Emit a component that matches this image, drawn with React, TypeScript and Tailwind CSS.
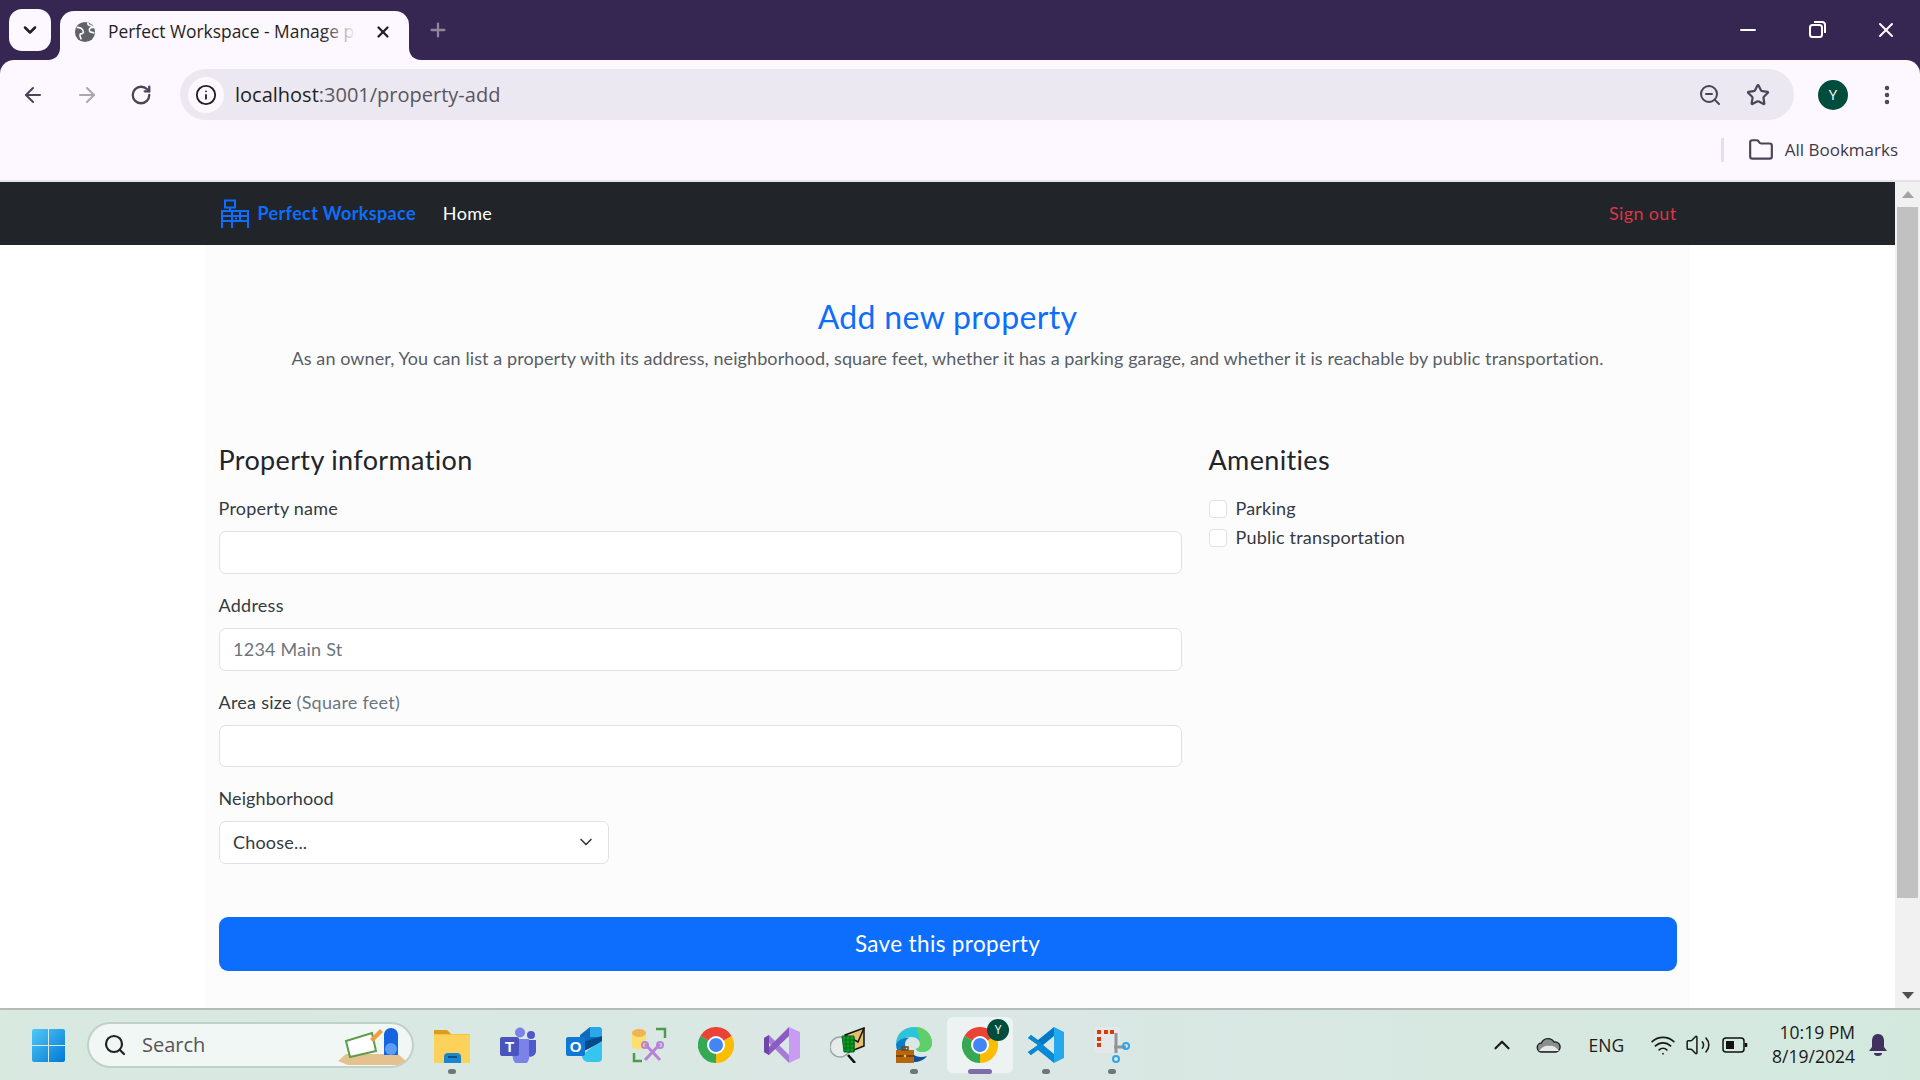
import React from "react";
import { ArrowLeft, ArrowRight, RotateCw, Info, ZoomOut, Star, EllipsisVertical, Folder, ChevronDown, ChevronUp, X, Plus, Minus, Search, Wifi, Volume2 } from "lucide-react";

const pageFont = "font-['Lato','Noto_Sans',sans-serif]";
const uiFont = "font-['Open_Sans','Noto_Sans',sans-serif]";

const Field = ({ label, hint, placeholder }: { label: string; hint?: string; placeholder?: string }) => (
  <div className="mb-[18px]">
    <label className="block mb-[9px] text-[18px] leading-[27px] tracking-[0.25px] text-[#343a40]">
      {label} {hint && <span className="text-[#6c757d]">{hint}</span>}
    </label>
    <input
      placeholder={placeholder}
      className="block w-full h-[42.75px] px-[13.5px] bg-white border border-[#dee2e6] rounded-[6.75px] text-[18px] tracking-[0.25px] placeholder:text-[#6c757d] outline-none"
    />
  </div>
);

const Amenity = ({ label }: { label: string }) => (
  <label className="flex items-center h-[29px] text-[18px] tracking-[0.2px] text-[#343a40]">
    <span className="w-[18px] h-[18px] mr-[9px] bg-white border border-[#dee2e6] rounded-[4px]" />
    {label}
  </label>
);

const WorkspaceLogo = () => (
  <svg viewBox="0 0 30 30" className="ml-[1px] w-[30px] h-[30px] text-[#0d6efd]" fill="none" stroke="currentColor" strokeWidth="2">
    <rect x="5" y="1.5" width="10" height="7" />
    <path d="M10 8.5v3M1 12h28M2 12v17M28 12v17M2 17h26M2 22h26M12 12v17M20 12v10M15 19.500h2" />
  </svg>
);

const TabCorner = ({ flip }: { flip?: boolean }) => (
  <svg viewBox="0 0 12 12" className={`absolute bottom-0 w-[12px] h-[12px] text-[#fdf7ff] ${flip ? "-right-[12px] -scale-x-100" : "-left-[12px]"}`}>
    <path d="M12 0v12H0C7 12 12 7 12 0z" fill="currentColor" />
  </svg>
);

const WindowsIcon = () => (
  <svg viewBox="0 0 35 35" className="w-[35px] h-[35px]">
    <defs>
      <linearGradient id="win" x1="0" y1="0" x2="1" y2="1">
        <stop offset="0" stopColor="#52c8f8" />
        <stop offset="1" stopColor="#0078d4" />
      </linearGradient>
    </defs>
    <path d="M1 3a2 2 0 0 1 2-2h14v16H1zM18 1h14a2 2 0 0 1 2 2v14H18zM1 18h16v16H3a2 2 0 0 1-2-2zM18 18h16v14a2 2 0 0 1-2 2H18z" fill="url(#win)" />
  </svg>
);

const FolderIcon = () => (
  <svg viewBox="0 0 36 36" className="w-[36px] h-[36px]">
    <path d="M0 3h13l4 4h19v29H0z" fill="#f5c343" />
    <path d="M0 3h13l4 4H0z" fill="#d99f1c" />
    <rect x="0" y="8" width="36" height="28" fill="#fdd25a" />
    <path d="M10 30a4 4 0 0 1 4-4h9a4 4 0 0 1 4 4v6H10z" fill="#1a86d0" />
    <rect x="14" y="29" width="9" height="2" fill="#0c4f87" />
  </svg>
);

const TeamsIcon = () => (
  <svg viewBox="0 0 36 36" className="w-[36px] h-[36px]">
    <circle cx="20" cy="5.500" r="5" fill="#7b83eb" />
    <circle cx="31" cy="8" r="4" fill="#5059c9" />
    <path d="M26 13h10v12a6 6 0 0 1-10 3z" fill="#5059c9" />
    <path d="M10 12h19v16a8 8 0 0 1-16 4z" fill="#7b83eb" />
    <rect x="0" y="10" width="19" height="19" rx="2" fill="#4b53bc" />
    <text x="9.500" y="25" textAnchor="middle" fontSize="15" fontWeight="700" fill="#fff" fontFamily="Liberation Sans">T</text>
  </svg>
);

const OutlookIcon = () => (
  <svg viewBox="0 0 36 36" className="w-[36px] h-[36px]">
    <path d="M14 8 24 0h8a4 4 0 0 1 4 3v11l-22 12z" fill="#0f6cbd" />
    <path d="M24 0h8a4 4 0 0 1 4 3v7H24z" fill="#28a8ea" />
    <path d="M14 16 36 9v6L14 26z" fill="#064a8c" />
    <path d="M36 14v17a4 4 0 0 1-4 4H22a6 6 0 0 1-6-6l6-6z" fill="#35c5ef" />
    <rect x="0" y="10" width="19" height="19" rx="2" fill="#0f78d4" />
    <text x="9.500" y="25" textAnchor="middle" fontSize="15" fontWeight="700" fill="#fff" fontFamily="Liberation Sans">O</text>
  </svg>
);

const ToolsIcon = () => (
  <svg viewBox="0 0 36 36" className="w-[36px] h-[36px]">
    <path d="M0 6c0-3 3-4 7-4s7 1 7 4v13c0 2-3 3-7 3s-7-1-7-3z" fill="#fddf6d" />
    <ellipse cx="7" cy="6" rx="7" ry="4" fill="#f0b357" />
    <path d="M24 2h9v9M2 26v8h8" fill="none" stroke="#4c9a4c" strokeWidth="2.500" />
    <path d="M13 17 28 33M28 17 13 33" stroke="#b583d8" strokeWidth="3" />
    <circle cx="13" cy="18" r="3" fill="none" stroke="#b583d8" strokeWidth="2" />
    <circle cx="28" cy="18" r="3" fill="none" stroke="#b583d8" strokeWidth="2" />
  </svg>
);

const ChromeIcon = () => (
  <svg viewBox="0 0 36 36" className="w-[36px] h-[36px]">
    <path d="M18 18 2.400 9A18 18 0 0 1 33.600 9z" fill="#ea4335" />
    <path d="M18 18 33.600 9A18 18 0 0 1 18 36z" fill="#fbbc04" />
    <path d="M18 18 18 36A18 18 0 0 1 2.400 9z" fill="#34a853" />
    <circle cx="18" cy="18" r="9" fill="#fff" />
    <circle cx="18" cy="18" r="7" fill="#4285f4" />
  </svg>
);

const VisualStudioIcon = () => (
  <svg viewBox="0 0 36 36" className="w-[36px] h-[36px]">
    <path d="M25 0 36 5v26l-11 5z" fill="#c79cf2" />
    <path d="M0 11 5 8l20 20v8z" fill="#a67bd8" />
    <path d="M25 0v9L5 28l-5-3z" fill="#8a5cc2" />
    <path d="M0 11l5-3v20l-5-3z" fill="#6f47a8" />
  </svg>
);

const MailSearchIcon = () => (
  <svg viewBox="0 0 36 36" className="w-[36px] h-[36px]">
    <circle cx="10" cy="20" r="10" fill="#e7ecea" stroke="#9ea5a3" strokeWidth="1.500" />
    <path d="M15 8 34 1v18l-15 6z" fill="#e5c06c" stroke="#111" strokeWidth="1.500" />
    <path d="M15 8 28 15 34 1" fill="none" stroke="#111" strokeWidth="1.500" />
    <path d="M12 9h12v16H14z" fill="#0d9e1a" stroke="#063" strokeWidth="1" />
    <path d="M14 13h11M14 17h11M14 21h10M16 9v16M20 9v16M24 10v15" stroke="#062" strokeWidth="1" />
    <path d="m18 28 7 8" stroke="#111" strokeWidth="2.500" />
  </svg>
);

const EdgeIcon = () => (
  <svg viewBox="0 0 36 36" className="w-[36px] h-[36px]">
    <path d="M0 17C0 7 8 0 18 0c10 0 18 7 18 16 0 6-5 9-10 9-3 0-5-1-6-3 3-1 4-3 4-5 0-4-4-7-8-7C8 10 3 13 0 17z" fill="#2cc4d8" />
    <path d="M20 0c9 0 16 7 16 16 0 6-5 9-10 9-3 0-5-1-6-3 3-1 4-3 4-5 0-6-2-11-4-17z" fill="#5fd068" />
    <path d="M0 17c3-5 9-7 13-6-4 2-5 6-3 10 0 5 3 9 8 12C8 33 0 27 0 17z" fill="#0f7cc6" />
    <path d="M18 35c5 0 10-2 13-6-6 2-12 1-15-3-2 4-1 7 2 9z" fill="#0f4f9c" />
    <rect x="0" y="23" width="18" height="13" fill="#b5660f" />
    <rect x="0" y="28" width="18" height="2" fill="#7a4308" />
    <rect x="6" y="20" width="6" height="3" fill="none" stroke="#7a4308" strokeWidth="1.500" />
    <circle cx="9" cy="29" r="1.300" fill="#f4c542" />
  </svg>
);

const VsCodeIcon = () => (
  <svg viewBox="0 0 36 36" className="w-[36px] h-[36px]">
    <path d="M26 0 36 5v26l-10 5z" fill="#24a8ee" />
    <path d="M26 0v9L9 23l-6 5-3-3 10-7L0 11l3-3 7 5z" fill="#0078c8" />
    <path d="M26 36V27L9 13 3 8l-3 3 10 7L0 25l3 3 7-5z" fill="#0a8ad4" />
  </svg>
);

const SnipIcon = () => (
  <svg viewBox="0 0 36 36" className="w-[36px] h-[36px]">
    <rect x="0" y="0" width="26" height="26" rx="4" fill="#e4e8e8" />
    <rect x="3" y="3" width="4" height="4" fill="#d83b01" />
    <rect x="10" y="3" width="4" height="4" fill="#d83b01" />
    <rect x="16" y="3" width="4" height="4" fill="#d83b01" />
    <rect x="3" y="10" width="4" height="4" fill="#d83b01" />
    <rect x="3" y="16" width="4" height="4" fill="#d83b01" />
    <path d="M22 6v20M20 20h12" stroke="#8e9696" strokeWidth="3" />
    <circle cx="32" cy="19" r="3" fill="none" stroke="#2ea3ea" strokeWidth="2" />
    <circle cx="22" cy="32" r="3" fill="none" stroke="#2ea3ea" strokeWidth="2" />
  </svg>
);

const tasks = [
  { icon: <FolderIcon />, dot: true },
  { icon: <TeamsIcon /> },
  { icon: <OutlookIcon /> },
  { icon: <ToolsIcon /> },
  { icon: <ChromeIcon /> },
  { icon: <VisualStudioIcon /> },
  { icon: <MailSearchIcon /> },
  { icon: <EdgeIcon />, dot: true },
  { icon: <ChromeIcon />, active: true },
  { icon: <VsCodeIcon />, dot: true },
  { icon: <SnipIcon />, dot: true },
];

const BrowserChrome = () => (
  <div className={`${uiFont} bg-[#352752]`}>
    <div className="flex h-[60px]">
      <div className="flex items-center justify-center mt-[9px] ml-[9px] w-[42px] h-[42px] rounded-[13px] bg-[#fdf7ff]">
        <ChevronDown className="w-[20px] h-[20px] text-[#1f1f1f]" strokeWidth={3} />
      </div>
      <div className="relative flex items-center mt-[11px] ml-[9px] w-[349px] h-[49px] px-[14px] rounded-t-[14px] bg-[#fdf7ff]">
        <TabCorner />
        <TabCorner flip />
        <svg viewBox="0 0 24 24" className="w-[22px] h-[22px] mb-[8px] shrink-0">
          <circle cx="12" cy="12" r="11" fill="#5f6368" />
          <path d="M3 7c3 0 6 1 7 4 1 2-1 3-3 3-1 1 0 4 1 6M15 2c0 2 1 3 3 3l3 2c-3 0-5 1-4 4 1 2 3 1 5 2" fill="none" stroke="#fdf7ff" strokeWidth="1.800" />
        </svg>
        <div className="relative ml-[12px] mb-[8px] w-[248px] overflow-hidden whitespace-nowrap text-[17.400px] text-[#1f1f1f]">
          Perfect Workspace - Manage properties
          <span className="absolute right-0 top-0 h-full w-[34px] bg-gradient-to-r from-transparent to-[#fdf7ff]" />
        </div>
        <X className="ml-[18px] mb-[8px] w-[18px] h-[18px] text-[#1f1f1f] shrink-0" strokeWidth={3} />
      </div>
      <Plus className="mt-[19px] ml-[18px] w-[22px] h-[22px] text-[#8f8699]" strokeWidth={2.5} />
      <div className="flex ml-auto mr-[22px] mt-[18px] h-[24px] items-center gap-[45px] text-white">
        <Minus className="w-[24px] h-[24px]" strokeWidth={1.8} />
        <svg viewBox="0 0 24 24" className="w-[24px] h-[24px]" fill="none" stroke="currentColor" strokeWidth="2">
          <rect x="5" y="7" width="12" height="12" rx="2.500" />
          <path d="M9 4h8a3 3 0 0 1 3 3v8" />
        </svg>
        <X className="w-[24px] h-[24px]" strokeWidth={2} />
      </div>
    </div>
    <div className="rounded-t-[14px] bg-[#fdf7ff]">
      <div className="flex items-center h-[51px] pt-0 pl-[6px] translate-y-[9px]">
        <span className="flex justify-center w-[54px]"><ArrowLeft className="w-[24px] h-[24px] text-[#4a4458]" /></span>
        <span className="flex justify-center w-[54px]"><ArrowRight className="w-[24px] h-[24px] text-[#aaa6b2]" /></span>
        <span className="flex justify-center w-[54px]"><RotateCw className="w-[22px] h-[22px] text-[#4a4458]" strokeWidth={2.5} /></span>
        <div className="flex items-center ml-[12px] w-[1614px] h-[51px] pl-[8px] pr-[24px] rounded-full bg-[#ebe8f1]">
          <span className="flex items-center justify-center w-[36px] h-[36px] rounded-full bg-[#fdf7ff]">
            <Info className="w-[22px] h-[22px] text-[#1f1f1f]" />
          </span>
          <span className="ml-[11px] text-[20px] text-[#1f1f1f]">
            localhost<span className="text-[#5a5560]">:3001/property-add</span>
          </span>
          <ZoomOut className="ml-auto w-[24px] h-[24px] text-[#4a4458]" />
          <Star className="ml-[24px] w-[24px] h-[24px] text-[#4a4458]" strokeWidth={2.2} />
        </div>
        <span className="flex items-center justify-center ml-[24px] w-[30px] h-[30px] rounded-full bg-[#004d3d] text-[15px] text-white">Y</span>
        <EllipsisVertical className="ml-[27px] w-[24px] h-[24px] text-[#4a4458]" strokeWidth={2.5} />
      </div>
      <div className="flex items-center justify-end h-[69px] pt-[9px] pr-[22px]">
        <span className="w-[3px] h-[24px] mr-[24px] bg-[#e3ddf7]" />
        <Folder className="w-[26px] h-[26px] text-[#4a4458]" />
        <span className="ml-[11px] text-[17px] text-[#3c3a45]">All Bookmarks</span>
      </div>
    </div>
    <div className="h-[2px] bg-[#e5e3e8]" />
  </div>
);

const Navbar = () => (
  <nav className={`${pageFont} h-[63px] bg-[#212529] text-[18px] tracking-[0.35px]`}>
    <div className="flex items-center h-full w-[1485px] mx-auto px-[13.5px]">
      <WorkspaceLogo />
      <span className="ml-[8px] font-bold text-[#0d6efd]">Perfect Workspace</span>
      <span className="ml-[27px] text-white">Home</span>
      <span className="ml-auto text-[#dc3545]">Sign out</span>
    </div>
  </nav>
);

const PropertyForm = () => (
  <main className={`${pageFont} w-[1485px] mx-auto h-full px-[13.5px] bg-[#fcfcfd] text-[#343a40]`}>
    <div className="pt-[50px] text-center">
      <h1 className="text-[32px] leading-[43px] tracking-[0.35px] text-[#0d6efd]">Add new property</h1>
      <p className="mt-[7px] text-[18px] leading-[27px] tracking-[0.09px] text-[#575e65]">
        As an owner, You can list a property with its address, neighborhood, square feet, whether it has a parking garage, and whether it is reachable by public transportation.
      </p>
    </div>
    <div className="grid grid-cols-[963px_1fr] gap-x-[27px] mt-[72px]">
      <div>
        <h4 className="mb-[19px] text-[27px] leading-[32px] tracking-[0.35px] text-[#212529]">Property information</h4>
        <Field label="Property name" />
        <Field label="Address" placeholder="1234 Main St" />
        <Field label="Area size" hint="(Square feet)" />
        <div>
          <label className="block mb-[9px] text-[18px] leading-[27px] tracking-[0.1px]">Neighborhood</label>
          <div className="relative w-[390px]">
            <select className="block w-full h-[42.75px] pl-[13.5px] appearance-none bg-white border border-[#dee2e6] rounded-[6.75px] text-[18px] tracking-[0.2px] outline-none">
              <option>Choose...</option>
            </select>
            <ChevronDown className="absolute right-[13px] top-[11px] w-[20px] h-[20px] text-[#343a40]" strokeWidth={2} />
          </div>
        </div>
      </div>
      <div>
        <h4 className="mb-[18px] text-[27px] leading-[32px] tracking-[0.35px] text-[#212529]">Amenities</h4>
        <Amenity label="Parking" />
        <Amenity label="Public transportation" />
      </div>
    </div>
    <button className="block w-full h-[54px] mt-[53px] rounded-[9px] bg-[#0d6efd] text-[22.5px] tracking-[0.35px] text-white">
      Save this property
    </button>
  </main>
);

const Scrollbar = () => (
  <div className="flex flex-col items-center shrink-0 w-[25px] bg-[#f1f1f1]">
    <span className="mt-[9px] w-0 h-0 border-x-[6px] border-x-transparent border-b-[7px] border-b-[#a3a3a3]" />
    <span className="mt-[9px] w-[21px] h-[691px] bg-[#c1c1c1]" />
    <span className="mt-auto mb-[9px] w-0 h-0 border-x-[6px] border-x-transparent border-t-[7px] border-t-[#505050]" />
  </div>
);

const Taskbar = () => (
  <div className={`${uiFont} flex items-center h-[72px] border-t-2 border-[#b5bbb8] bg-gradient-to-r from-[#d8e9e0] via-[#dbe7e5] to-[#d3e9de]`}>
    <div className="ml-[31px]"><WindowsIcon /></div>
    <div className="flex items-center ml-[21px] w-[327px] h-[46px] pl-[14px] pr-[6px] rounded-full border-2 border-[#c3cfc9] bg-[#f1f7f4]">
      <Search className="w-[24px] h-[24px] text-[#222]" strokeWidth={2.2} />
      <span className="ml-[15px] text-[20px] text-[#555]">Search</span>
      <svg viewBox="0 0 68 40" className="ml-auto w-[68px] h-[40px]">
        <path d="M0 36 8 29h52l8 7-8 4H10z" fill="#e4c28f" />
        <path d="M8 16 34 8l4 18-26 6z" fill="#fff" stroke="#5c9e4c" strokeWidth="2" />
        <path d="M32 14 42 4l3 3-10 10z" fill="#f39c3d" />
        <path d="M46 30V10c0-4 3-7 7-7s7 3 7 7v20z" fill="#1565e0" />
        <circle cx="53" cy="24" r="6" fill="#5b9cf5" />
      </svg>
    </div>
    <div className="flex ml-[5px]">
      {tasks.map((task, i) => (
        <div key={i} className={`relative flex items-center justify-center w-[66px] h-[56px] rounded-[6px] ${task.active ? "bg-[#edf3f3]" : ""}`}>
          {task.icon}
          {task.active && (
            <span className="absolute right-[4px] top-[2px] flex items-center justify-center w-[22px] h-[22px] rounded-full bg-[#004d3d] text-[12px] text-white">Y</span>
          )}
          {task.dot && <span className="absolute -bottom-[1px] w-[8px] h-[5px] rounded-full bg-[#6f7775]" />}
          {task.active && <span className="absolute -bottom-[1px] w-[24px] h-[5px] rounded-full bg-[#7f6da8]" />}
        </div>
      ))}
    </div>
    <div className="flex items-center ml-auto text-[#1a1a1a]">
      <ChevronUp className="w-[26px] h-[26px]" strokeWidth={2} />
      <svg viewBox="0 0 26 18" className="ml-[21px] w-[26px] h-[18px]">
        <path d="M6 16a4.500 4.500 0 0 1-.5-9A7 7 0 0 1 18 6a5 5 0 0 1 2 10z" fill="#8a8f8d" stroke="#222" strokeWidth="1.400" />
        <path d="M3 15c3-5 8-6 11-5 3-1 7 2 9 5z" fill="#e6eae8" />
      </svg>
      <span className="ml-[26px] text-[17.500px]">ENG</span>
      <Wifi className="ml-[26px] w-[26px] h-[26px]" strokeWidth={1.6} />
      <Volume2 className="ml-[9px] w-[26px] h-[26px]" strokeWidth={1.4} />
      <svg viewBox="0 0 26 18" className="ml-[11px] w-[26px] h-[18px]" fill="none" stroke="#111" strokeWidth="1.500">
        <rect x="1" y="2" width="21" height="14" rx="3" />
        <rect x="4" y="5" width="8" height="8" fill="#111" stroke="none" />
        <path d="M24 7v4" strokeWidth="2.500" />
      </svg>
      <div className="ml-[24px] text-right text-[17.500px] leading-[24px] -translate-y-[1px]">
        <div>10:19 PM</div>
        <div>8/19/2024</div>
      </div>
      <svg viewBox="0 0 20 24" className="ml-[13px] mr-[32px] w-[20px] h-[24px]" fill="#42305f">
        <path d="M10 1c4 0 6 3 6 7v6l3 4H1l3-4V8c0-4 2-7 6-7zM6 20h8a4 3 0 0 1-8 0z" />
      </svg>
    </div>
  </div>
);

const App = () => {
  return (
    <div className="flex flex-col w-[1920px] h-[1080px] overflow-hidden bg-white">
      <BrowserChrome />
      <div className="flex flex-1 min-h-0">
        <div className="flex flex-col flex-1 min-w-0">
          <Navbar />
          <div className="flex-1 min-h-0">
            <PropertyForm />
          </div>
        </div>
        <Scrollbar />
      </div>
      <Taskbar />
    </div>
  );
};

export default App;
